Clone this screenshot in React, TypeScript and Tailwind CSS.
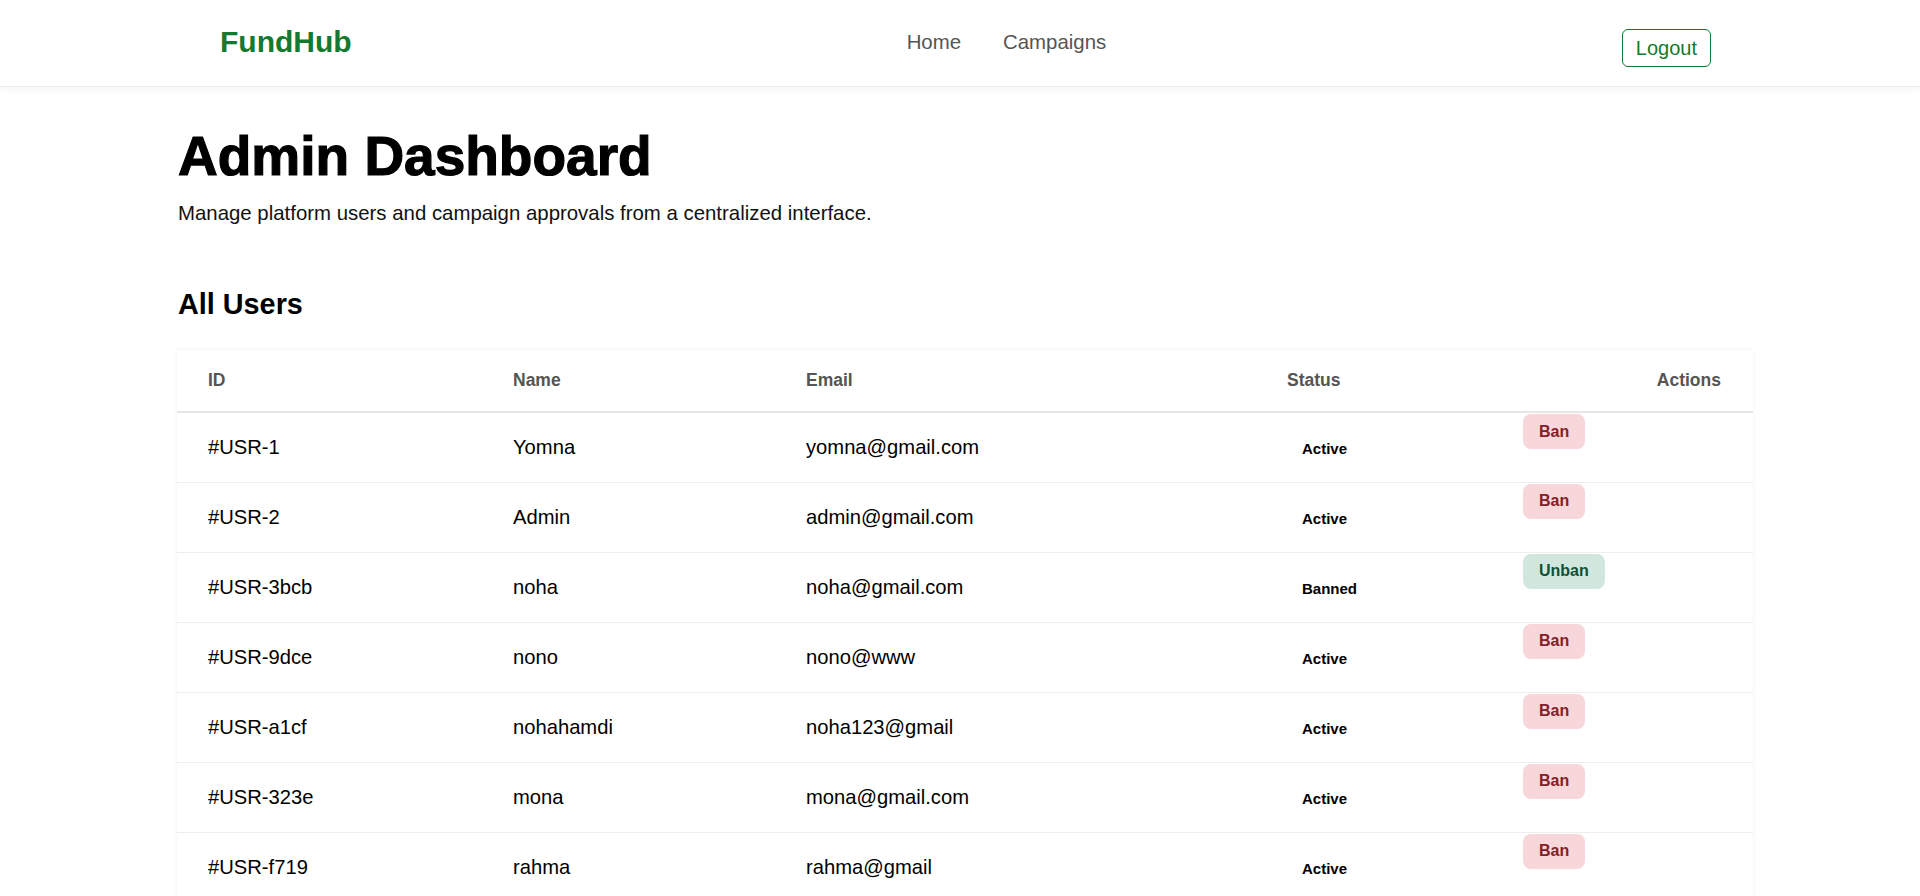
import { useState } from "react";

type User = {
    id: string;
    name: string;
    email: string;
    banned: boolean;
};

const initialUsers: User[] = [
    { id: "#USR-1", name: "Yomna", email: "yomna@gmail.com", banned: false },
    { id: "#USR-2", name: "Admin", email: "admin@gmail.com", banned: false },
    { id: "#USR-3bcb", name: "noha", email: "noha@gmail.com", banned: true },
    { id: "#USR-9dce", name: "nono", email: "nono@www", banned: false },
    { id: "#USR-a1cf", name: "nohahamdi", email: "noha123@gmail", banned: false },
    { id: "#USR-323e", name: "mona", email: "mona@gmail.com", banned: false },
    { id: "#USR-f719", name: "rahma", email: "rahma@gmail", banned: false },
];

function Navbar() {
    return (
        <header className="flex items-start h-[87px] pt-[24px] bg-white border-b border-[#ececec] shadow-[0_2px_8px_rgba(0,0,0,0.05)]">
            <a href="#" className="ml-[220px] text-[30px] leading-[36px] font-bold text-[#137a2f]">FundHub</a>
            <nav className="flex gap-[42px] ml-[555px] mt-[6px] text-[20.4px] leading-[24px] text-[#555]">
                <a href="#">Home</a>
                <a href="#">Campaigns</a>
            </nav>
            <button className="ml-auto mr-[209px] mt-[5px] h-[38px] px-[13px] border border-[#137a2f] rounded-md text-[20px] leading-[24px] text-[#137a2f] bg-white">
                Logout
            </button>
        </header>
    );
}

export default function App() {
    const [users, setUsers] = useState(initialUsers);

    const toggleBan = (id: string) => {
        setUsers((prev) => prev.map((u) => (u.id === id ? { ...u, banned: !u.banned } : u)));
    };

    return (
        <div className="min-h-screen bg-white text-black font-['Liberation_Sans',Arial,sans-serif]">
            <Navbar />
            <main className="pl-[177px] pt-[37px] pb-16">
                <h1 className="pl-px text-[55px] leading-[65px] font-bold [-webkit-text-stroke:1.2px_#000]">Admin Dashboard</h1>
                <p className="pl-px mt-[10px] text-[20.4px] leading-[28px] text-[#111]">
                    Manage platform users and campaign approvals from a centralized interface.
                </p>

                <h2 className="pl-px mt-[60px] text-[28.8px] leading-[34px] font-bold">All Users</h2>

                <div className="mt-[29px] w-[1576px] bg-white shadow-[0_0_4px_rgba(0,0,0,0.06)]">
                    <table className="w-full table-fixed border-collapse">
                        <colgroup>
                            <col className="w-[305px]" />
                            <col className="w-[293px]" />
                            <col className="w-[481px]" />
                            <col className="w-[236px]" />
                            <col className="w-[261px]" />
                        </colgroup>
                        <thead>
                            <tr className="h-[62px] border-b-2 border-[#e6e6e6] text-[17.5px] font-bold text-[#555]">
                                <th className="px-[31px] text-left">ID</th>
                                <th className="px-[31px] text-left">Name</th>
                                <th className="px-[31px] text-left">Email</th>
                                <th className="px-[31px] text-left">Status</th>
                                <th className="px-[32px] text-right">Actions</th>
                            </tr>
                        </thead>
                        <tbody>
                            {users.map((u) => (
                                <tr key={u.id} className="h-[70px] border-b border-[#eeeeee] text-[20.2px]">
                                    <td className="px-[31px] align-middle">{u.id}</td>
                                    <td className="px-[31px] align-middle">{u.name}</td>
                                    <td className="px-[31px] align-middle">{u.email}</td>
                                    <td className="px-[31px] align-middle">
                                        <span className="px-[15px] text-[15px] font-bold">{u.banned ? "Banned" : "Active"}</span>
                                    </td>
                                    <td className="px-[31px] pt-px align-top">
                                        {u.banned ? (
                                            <button
                                                onClick={() => toggleBan(u.id)}
                                                className="h-[35px] px-[16px] rounded-lg bg-[#d1e7dd] text-[#0f5132] text-[16px] font-bold"
                                            >
                                                Unban
                                            </button>
                                        ) : (
                                            <button
                                                onClick={() => toggleBan(u.id)}
                                                className="h-[35px] px-[16px] rounded-lg bg-[#f8d7da] text-[#842029] text-[16px] font-bold"
                                            >
                                                Ban
                                            </button>
                                        )}
                                    </td>
                                </tr>
                            ))}
                        </tbody>
                    </table>
                </div>
            </main>
        </div>
    );
}
